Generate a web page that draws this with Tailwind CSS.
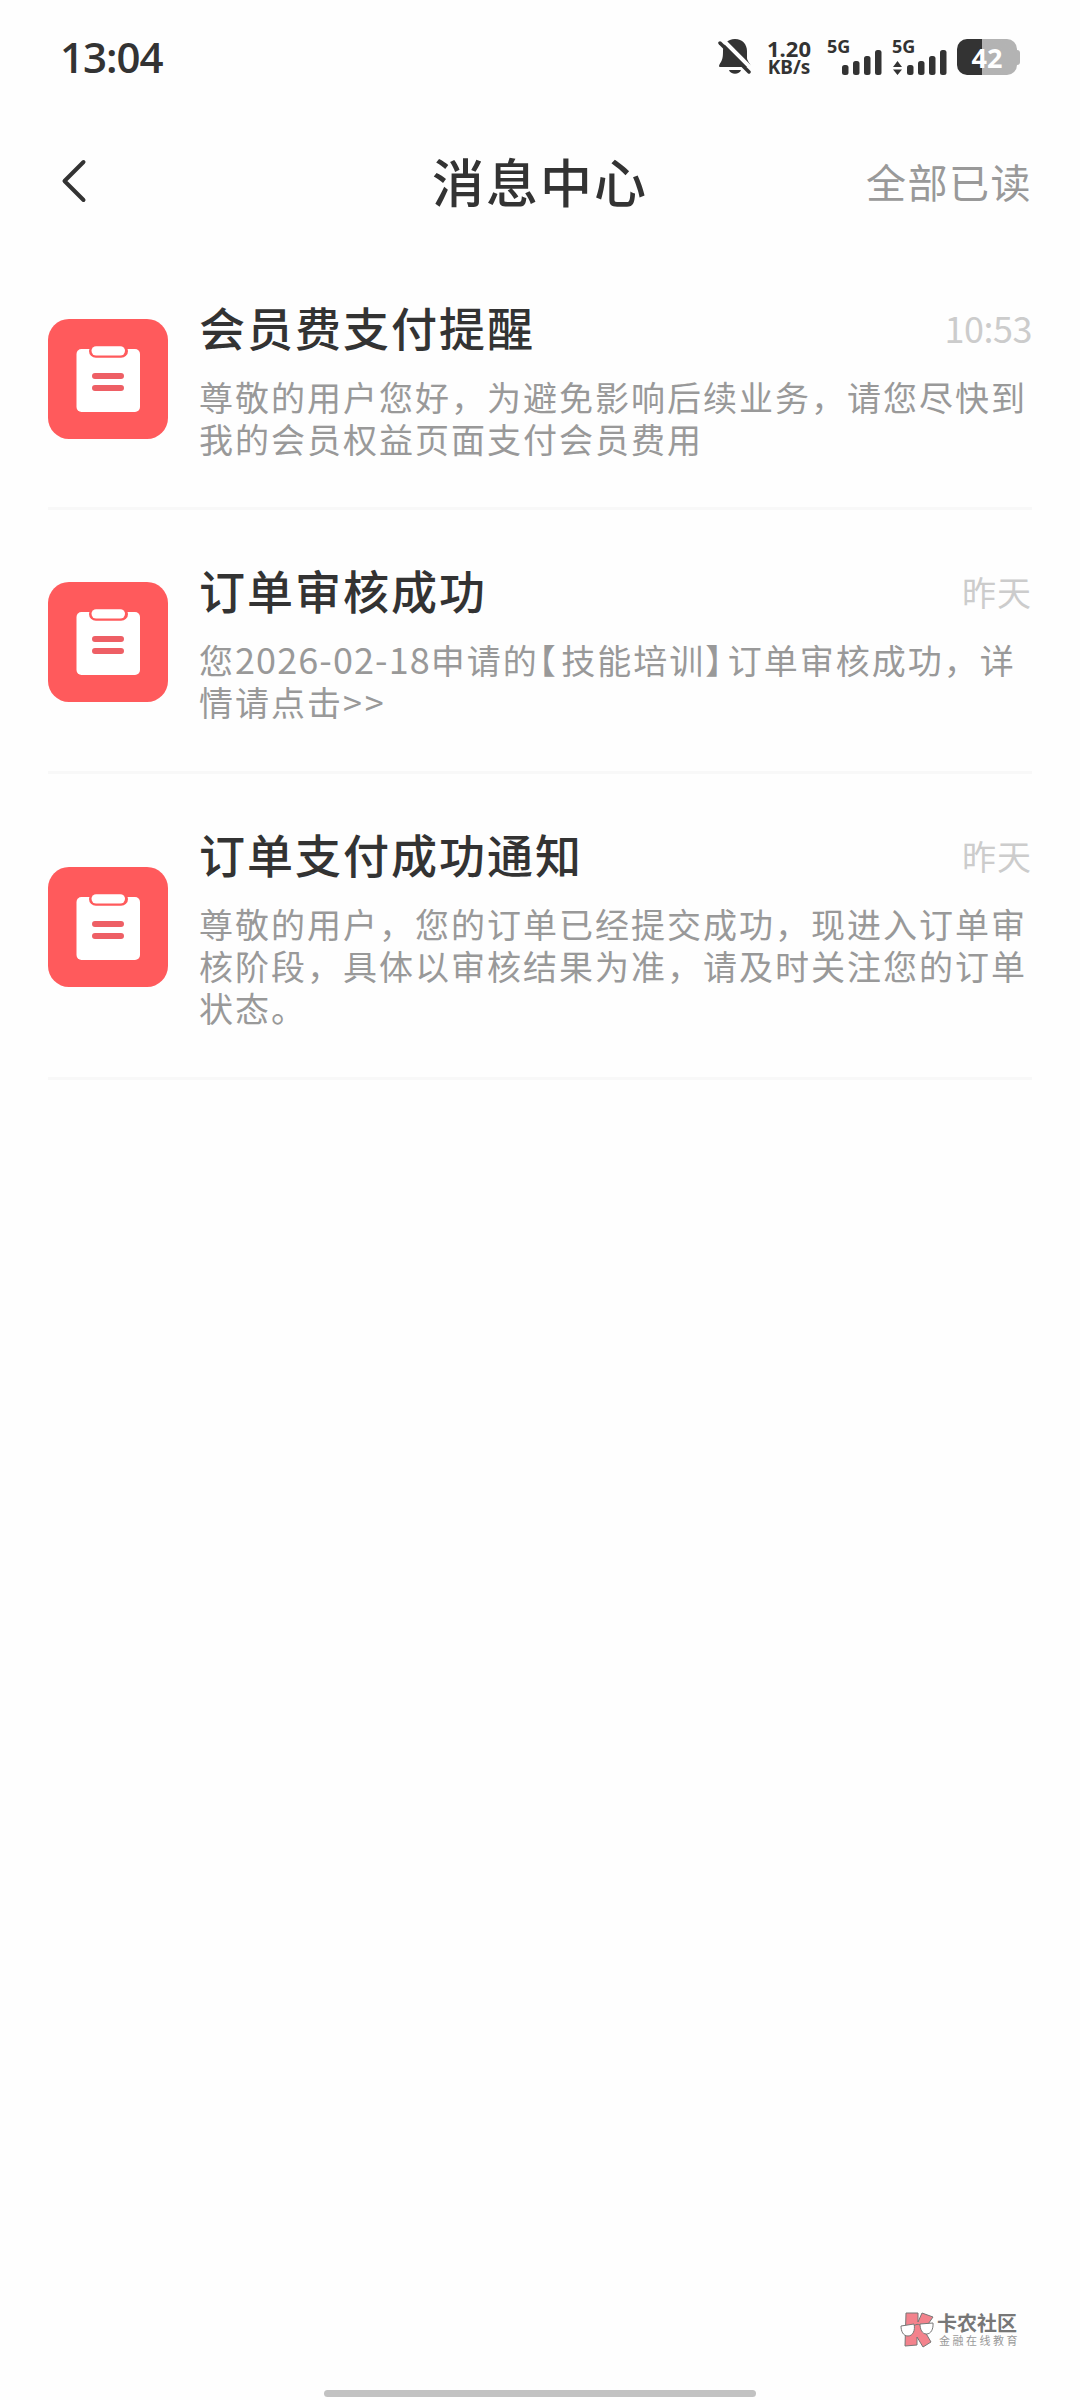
<!DOCTYPE html>
<html lang="zh-CN">
<head>
  <meta charset="UTF-8" />
  <meta name="viewport" content="width=device-width, initial-scale=1.0" />
  <title>消息中心</title>
  <script src="https://cdn.jsdelivr.net/npm/@tailwindcss/browser@4"></script>
</head>
<body class="bg-[#fefefe] text-[#333] font-['Noto_Sans_CJK_SC',sans-serif]">
<div class="w-[1080px] h-[2400px] flex flex-col overflow-hidden">

  <!-- 状态栏 -->
  <div class="h-[114px] pl-[60px] pr-[60px] flex justify-between items-center">
    <span class="font-['Open_Sans'] font-semibold text-[42px] tracking-[-1px] leading-none">13:04</span>

    <div class="flex items-center">
      <svg class="w-[34px] h-[38px] mr-[15px]" viewBox="0 0 34 38">
        <path d="M17 1c7.500 0 12 5.500 12 12v7c0 3 4 6.500 4 9H2c-1.500 0-1-2 0-3.500C4.500 22 5 19 5 13 5 6 9.500 1 17 1z" fill="#333"/>
        <path d="M11 32h12c-1.500 5-10.500 5-12 0z" fill="#333"/>
        <path d="M5 2l29 29" stroke="#fefefe" stroke-width="4"/>
        <path d="M2 5l29 29" stroke="#333" stroke-width="3.500" stroke-linecap="round"/>
      </svg>

      <div class="w-[44px] mr-[17px] flex flex-col items-center font-['Noto_Sans'] font-bold whitespace-nowrap">
        <span class="text-[22px] leading-[20px]">1.20</span>
        <span class="text-[19px] leading-[18px]">KB/s</span>
      </div>

      <svg class="w-[56px] h-[38px] mr-[9px] overflow-visible font-['Noto_Sans'] font-bold text-[18px]" viewBox="0 0 56 38" fill="#333">
        <text x="-1" y="15">5G</text>
        <rect x="14" y="27" width="6.500" height="10" rx="2.500"/>
        <rect x="25" y="23" width="6.500" height="14" rx="2.500"/>
        <rect x="36" y="18" width="6.500" height="19" rx="2.500"/>
        <rect x="47" y="12" width="6.500" height="25" rx="2.500"/>
      </svg>

      <svg class="w-[56px] h-[38px] mr-[8px] overflow-visible font-['Noto_Sans'] font-bold text-[18px]" viewBox="0 0 56 38" fill="#333">
        <text x="-1" y="15">5G</text>
        <path d="M0 29L4.500 23l4.500 6zM0 31.500L4.500 37l4.500-5.500z"/>
        <rect x="14" y="27" width="6.500" height="10" rx="2.500"/>
        <rect x="25" y="23" width="6.500" height="14" rx="2.500"/>
        <rect x="36" y="18" width="6.500" height="19" rx="2.500"/>
        <rect x="47" y="12" width="6.500" height="25" rx="2.500"/>
      </svg>

      <!-- 电量 42% -->
      <div class="flex items-center">
        <div class="w-[60px] h-[36px] rounded-[10px] bg-linear-to-r from-[#333] from-42% to-[#b3b3b3] to-42% flex items-center justify-center">
          <span class="font-['Open_Sans'] font-bold text-[27px] leading-none text-white">42</span>
        </div>
        <div class="w-[3px] h-[15px] rounded-r-[3px] bg-[#b3b3b3]"></div>
      </div>
    </div>
  </div>

  <!-- 标题栏 -->
  <header class="h-[136px] px-[48px] pb-[3px] grid grid-cols-3 items-center">
    <svg class="w-[28px] h-[44px] ml-[12px]" viewBox="0 0 28 44" fill="none" stroke="#333" stroke-width="4" stroke-linecap="round" stroke-linejoin="round">
      <path d="M23.500 3L4.500 22l19 19"/>
    </svg>
    <h1 class="text-center text-[52px] font-medium tracking-[2px] leading-none whitespace-nowrap">消息中心</h1>
    <span class="text-right text-[40px] tracking-[1.500px] leading-none text-[#999]">全部已读</span>
  </header>

  <!-- 消息列表 -->
  <main class="flex-1 px-[48px]">
    <div class="h-[260px] border-b-3 border-[#f8f8f8] flex items-center gap-[31px]">
      <svg class="w-[120px] h-[120px] shrink-0" viewBox="0 0 120 120">
        <rect width="120" height="120" rx="21" fill="#ff5a5c"/>
        <rect x="28.500" y="30" width="63.500" height="63" rx="5" fill="#fff"/>
        <rect x="41" y="25" width="39" height="13.800" rx="6.900" fill="#ff5a5c"/>
        <rect x="43.500" y="27.200" width="33.500" height="9.300" rx="4.650" fill="#fff"/>
        <path d="M47 57h26M47 69h26" stroke="#ee5f65" stroke-width="6" stroke-linecap="round"/>
      </svg>
      <div class="flex-1 h-[160px]">
        <div class="flex items-start justify-between h-[77px] pt-[4px]">
          <h2 class="text-[46px] font-medium tracking-[2px] leading-none">会员费支付提醒</h2>
          <span class="pt-[6px] text-[36px] tracking-[-0.500px] leading-none text-[#ccc]">10:53</span>
        </div>
        <p class="text-[34px] tracking-[2px] leading-[42px] text-[#999] whitespace-nowrap">尊敬的用户您好，为避免影响后续业务，请您尽快到<br>我的会员权益页面支付会员费用</p>
      </div>
    </div>

    <div class="h-[264px] pt-[3px] border-b-3 border-[#f8f8f8] flex items-center gap-[31px]">
      <svg class="w-[120px] h-[120px] shrink-0" viewBox="0 0 120 120">
        <rect width="120" height="120" rx="21" fill="#ff5a5c"/>
        <rect x="28.500" y="30" width="63.500" height="63" rx="5" fill="#fff"/>
        <rect x="41" y="25" width="39" height="13.800" rx="6.900" fill="#ff5a5c"/>
        <rect x="43.500" y="27.200" width="33.500" height="9.300" rx="4.650" fill="#fff"/>
        <path d="M47 57h26M47 69h26" stroke="#ee5f65" stroke-width="6" stroke-linecap="round"/>
      </svg>
      <div class="flex-1 h-[160px]">
        <div class="flex items-start justify-between h-[77px] pt-[4px]">
          <h2 class="text-[46px] font-medium tracking-[2px] leading-none">订单审核成功</h2>
          <span class="pt-[9px] text-[34px] tracking-[1px] leading-none text-[#ccc]">昨天</span>
        </div>
        <p class="text-[34px] tracking-[2px] leading-[42px] text-[#999] whitespace-nowrap">您<span class="text-[36px] leading-none tracking-[1.100px]">2026-02-18</span>申请的<span class="[font-feature-settings:'halt'] tracking-[5.500px]">【</span>技能培训<span class="[font-feature-settings:'halt'] tracking-[5.500px]">】</span>订单审核成功，详<br>情请点击<span class="tracking-[3px]">&gt;&gt;</span></p>
      </div>
    </div>

    <div class="h-[306px] pt-[3px] border-b-3 border-[#f8f8f8] flex items-center gap-[31px]">
      <svg class="w-[120px] h-[120px] shrink-0" viewBox="0 0 120 120">
        <rect width="120" height="120" rx="21" fill="#ff5a5c"/>
        <rect x="28.500" y="30" width="63.500" height="63" rx="5" fill="#fff"/>
        <rect x="41" y="25" width="39" height="13.800" rx="6.900" fill="#ff5a5c"/>
        <rect x="43.500" y="27.200" width="33.500" height="9.300" rx="4.650" fill="#fff"/>
        <path d="M47 57h26M47 69h26" stroke="#ee5f65" stroke-width="6" stroke-linecap="round"/>
      </svg>
      <div class="flex-1 h-[202px]">
        <div class="flex items-start justify-between h-[77px] pt-[4px]">
          <h2 class="text-[46px] font-medium tracking-[2px] leading-none">订单支付成功通知</h2>
          <span class="pt-[9px] text-[34px] tracking-[1px] leading-none text-[#ccc]">昨天</span>
        </div>
        <p class="text-[34px] tracking-[2px] leading-[42px] text-[#999] whitespace-nowrap">尊敬的用户，您的订单已经提交成功，现进入订单审<br>核阶段，具体以审核结果为准，请及时关注您的订单<br>状态。</p>
      </div>
    </div>
  </main>

  <!-- 社区标识 -->
  <div class="h-[36px] mb-[42px] pl-[900px] flex items-center gap-[3px]">
    <svg class="w-[34px] h-[36px] shrink-0" viewBox="0 0 34 36" stroke="#777" stroke-width="1">
      <path d="M6 1h12v9l4-9 11 4-9 13 7 12-8 5-6-10v8l-12 1z" fill="#f3828c"/>
      <path d="M1 14l13-2c1.500 6-1 12-6 12s-7-5-7-10zM20 12l13-1c0.500 6-2 11-6.500 11S20 17 20 12z" fill="#fff"/>
      <path d="M14 14c2-2 4-2 6-1" fill="none"/>
    </svg>
    <div class="flex flex-col whitespace-nowrap">
      <span class="text-[20px] leading-[20px] font-bold text-[#777]">卡农社区</span>
      <span class="pl-[2px] text-[11px] leading-[14px] tracking-[2.500px] text-[#999]">金融在线教育</span>
    </div>
  </div>

  <!-- 底部手势条 -->
  <div class="w-[432px] h-[7px] mb-[3px] mx-auto rounded-full bg-[#c2c2c2]"></div>
</div>
</body>
</html>
